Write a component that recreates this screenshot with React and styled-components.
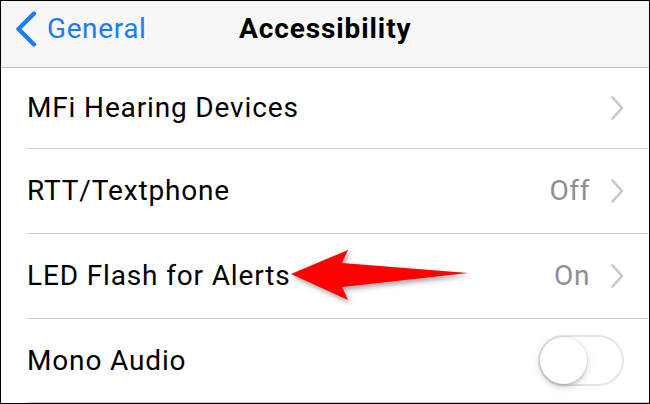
import React from "react";
import styled, { createGlobalStyle } from "styled-components";

const Global = createGlobalStyle`
  html, body { margin: 0; padding: 0; background: #fff; }
  body { font-family: Roboto, "Liberation Sans", Arial, sans-serif; -webkit-font-smoothing: antialiased; }
`;

const Frame = styled.div`
  position: relative;
  width: 650px;
  height: 404px;
  box-sizing: border-box;
  border: 1px solid #000;
  background: #fff;
  display: flex;
  flex-direction: column;
  overflow: hidden;
`;

const NavBar = styled.header`
  flex: none;
  background: #f7f7f7;
  border-bottom: 1px solid #bdbdc0;
  display: flex;
  align-items: center;
  padding: 0 0 11px 14px;
  box-sizing: content-box;
  height: 55px;
`;

const Back = styled.div`
  width: 224px;
  display: flex;
  align-items: center;
  gap: 10px;
  color: #1a7df8;
  font-size: 28px;
  letter-spacing: 0.6px;
`;

const BackChevron = styled.svg`
  width: 22px;
  height: 36px;
  flex: none;
`;

const Title = styled.h1`
  margin: 0;
  font-size: 28px;
  font-weight: 700;
  color: #000;
  letter-spacing: 0.9px;
`;

const List = styled.div`
  display: flex;
  flex-direction: column;
`;

const Row = styled.div`
  height: ${(p) => p.$h}px;
  margin-left: 25px;
  padding: 0 25px 0 1px;
  border-bottom: 1px solid #d2d2d6;
  display: flex;
  align-items: center;
  justify-content: space-between;
  box-sizing: content-box;
`;

const Label = styled.span`
  font-size: 28px;
  color: #000;
  letter-spacing: 0.85px;
  padding-bottom: 1px;
`;

const Accessory = styled.div`
  display: flex;
  align-items: center;
  gap: 21px;
`;

const Value = styled.span`
  font-size: 28px;
  color: #8e8e93;
  letter-spacing: 0.6px;
  padding-bottom: 1px;
`;

const Chevron = styled.svg`
  width: 13px;
  height: 24px;
`;

const Toggle = styled.div`
  position: relative;
  width: 86px;
  height: 51px;
  box-sizing: border-box;
  border-radius: 26px;
  border: 2px solid #e6e6e8;
  background: #fff;
`;

const Knob = styled.div`
  position: absolute;
  left: 0;
  top: 0;
  width: 47px;
  height: 47px;
  border-radius: 50%;
  background: #fff;
  box-shadow: 0 3px 8px rgba(0, 0, 0, 0.18), 0 0 0 1px rgba(0, 0, 0, 0.05), 0 3px 1px rgba(0, 0, 0, 0.06);
`;

const Arrow = styled.svg`
  position: absolute;
  left: 0;
  top: 0;
  width: 650px;
  height: 404px;
  pointer-events: none;
  filter: drop-shadow(2px 3px 2.5px rgba(0, 0, 0, 0.35));
`;

const RightChevron = () => (
  <Chevron viewBox="0 0 13 24">
    <path d="M1.5 1.5 L11 12 L1.5 22.5" fill="none" stroke="#c7c7cc" strokeWidth="2.6" strokeLinecap="round" strokeLinejoin="round" />
  </Chevron>
);

const rows = [
  { label: "MFi Hearing Devices", h: 80, kind: "link" },
  { label: "RTT/Textphone", h: 84, kind: "link", value: "Off" },
  { label: "LED Flash for Alerts", h: 84, kind: "link", value: "On" },
  { label: "Mono Audio", h: 83, kind: "toggle" },
];

export default function App() {
  return (
    <>
      <Global />
      <Frame>
        <NavBar>
          <Back>
            <BackChevron viewBox="0 0 22 36">
              <path d="M19 2.5 L3.5 18 L19 33.5" fill="none" stroke="#1a7df8" strokeWidth="4.4" strokeLinecap="round" strokeLinejoin="round" />
            </BackChevron>
            <span>General</span>
          </Back>
          <Title>Accessibility</Title>
        </NavBar>
        <List>
          {rows.map((r) => (
            <Row key={r.label} $h={r.h}>
              <Label>{r.label}</Label>
              {r.kind === "toggle" ? (
                <Toggle>
                  <Knob />
                </Toggle>
              ) : (
                <Accessory>
                  {r.value && <Value>{r.value}</Value>}
                  <RightChevron />
                </Accessory>
              )}
            </Row>
          ))}
        </List>
        <Arrow viewBox="0 0 650 404">
          <polygon points="290,273 347,249 341,262 467,272 341,286 347,299" fill="#ff0000" />
        </Arrow>
      </Frame>
    </>
  );
}
